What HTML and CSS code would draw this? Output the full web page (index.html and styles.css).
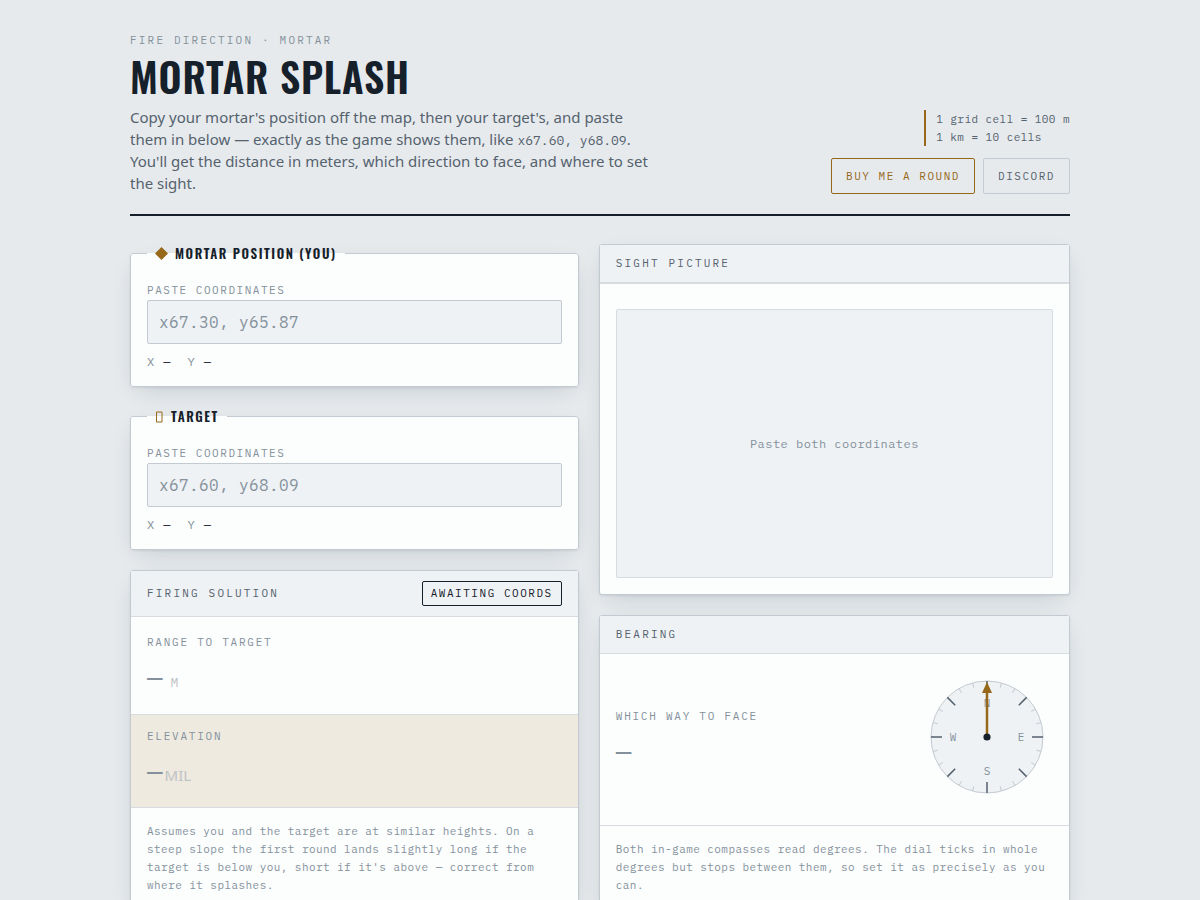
FILE: index.html
```html
<!DOCTYPE html>
<html lang="en">
<head>
<meta charset="utf-8">
<meta name="viewport" content="width=device-width, initial-scale=1">
<title>Mortar Splash</title>
<link rel="stylesheet" href="styles.css">
</head>
<body>
<div class="page">
  <header class="masthead">
    <div class="intro">
      <p class="eyebrow">FIRE DIRECTION · MORTAR</p>
      <h1 class="title">MORTAR SPLASH</h1>
      <p class="lede">Copy your mortar's position off the map, then your target's, and paste them in below — exactly as the game shows them, like <code class="sample">x67.60, y68.09</code>. You'll get the distance in meters, which direction to face, and where to set the sight.</p>
    </div>
    <div class="aside">
      <p class="scale">1 grid cell = 100 m<br>1 km = 10 cells</p>
      <nav class="links">
        <a class="link link-accent" href="#support">BUY ME A ROUND</a>
        <a class="link" href="#discord">DISCORD</a>
      </nav>
    </div>
  </header>

  <main class="columns">
    <div class="column">
      <fieldset class="card position">
        <legend class="legend"><span class="legend-row"><svg class="diamond" viewBox="0 0 12 12" aria-hidden="true"><path d="M6 0L12 6L6 12L0 6Z"/></svg>MORTAR POSITION (YOU)</span></legend>
        <label class="label" for="mortar">PASTE COORDINATES</label>
        <input class="coords" id="mortar" type="text" placeholder="x67.30, y65.87">
        <div class="parsed"><span>X <b class="value">—</b></span><span>Y <b class="value">—</b></span></div>
      </fieldset>

      <fieldset class="card position">
        <legend class="legend"><span class="legend-row"><svg class="marker" viewBox="0 0 9 12" aria-hidden="true"><path d="M1.5 1H7V11H1.5Z"/></svg>TARGET</span></legend>
        <label class="label" for="target">PASTE COORDINATES</label>
        <input class="coords" id="target" type="text" placeholder="x67.60, y68.09">
        <div class="parsed"><span>X <b class="value">—</b></span><span>Y <b class="value">—</b></span></div>
      </fieldset>

      <section class="card">
        <div class="card-head">
          <h2 class="card-title">FIRING SOLUTION</h2>
          <span class="badge">AWAITING COORDS</span>
        </div>
        <div class="reading reading-range">
          <p class="reading-label">RANGE TO TARGET</p>
          <p class="figure">—<span class="unit unit-mono">M</span></p>
        </div>
        <div class="reading reading-elevation">
          <p class="reading-label">ELEVATION</p>
          <p class="figure">—<span class="unit">MIL</span></p>
        </div>
        <p class="note">Assumes you and the target are at similar heights. On a steep slope the first round lands slightly long if the target is below you, short if it's above — correct from where it splashes.</p>
      </section>
    </div>

    <div class="column">
      <section class="card">
        <div class="card-head">
          <h2 class="card-title">SIGHT PICTURE</h2>
        </div>
        <div class="sight">
          <div class="screen">Paste both coordinates</div>
        </div>
      </section>

      <section class="card">
        <div class="card-head">
          <h2 class="card-title">BEARING</h2>
        </div>
        <div class="bearing">
          <div>
            <p class="reading-label">WHICH WAY TO FACE</p>
            <p class="figure">—</p>
          </div>
          <svg class="compass" viewBox="-66 -66 132 132" role="img" aria-label="Compass pointing north">
            <circle class="dial" r="56"/>
            <g class="minor">
              <path id="pair" d="M14.5 -54.1L13.2 -49.3M28 -48.5L25.5 -44.2M48.5 -28L44.2 -25.5M54.1 -14.5L49.3 -13.2"/>
              <use href="#pair" transform="rotate(90)"/>
              <use href="#pair" transform="rotate(180)"/>
              <use href="#pair" transform="rotate(270)"/>
            </g>
            <path class="major" d="M0 -56V-45M0 56V45M-56 0H-45M56 0H45M39.6 -39.6L31.8 -31.8M39.6 39.6L31.8 31.8M-39.6 39.6L-31.8 31.8M-39.6 -39.6L-31.8 -31.8"/>
            <text class="point" x="0" y="-30">N</text>
            <text class="point" x="34" y="4">E</text>
            <text class="point" x="0" y="38">S</text>
            <text class="point" x="-34" y="4">W</text>
            <path class="needle" d="M0 0V-46"/>
            <path class="tip" d="M0 -55L5 -44H-5Z"/>
            <circle class="hub" r="3.6"/>
          </svg>
        </div>
        <p class="note">Both in-game compasses read degrees. The dial ticks in whole degrees but stops between them, so set it as precisely as you can.</p>
      </section>
    </div>
  </main>
</div>
</body>
</html>
```

FILE: styles.css
```css
:root {
  --ground: #e6eaed;
  --panel: #fcfdfd;
  --inset: #eff2f5;
  --ink: #16202a;
  --body: #55626d;
  --muted: #84919c;
  --line: #c3cad1;
  --hairline: #d6dce0;
  --accent: #96681a;
  --mono: "IBM Plex Mono", "Liberation Mono", monospace;
  --display: Oswald, "DejaVu Sans Condensed", sans-serif;
}

* {
  box-sizing: border-box;
}

body {
  margin: 0;
  background: var(--ground);
  color: var(--ink);
  font-family: "Noto Sans", sans-serif;
  overflow-x: hidden;
}

p, h1, h2 {
  margin: 0;
}

.page {
  max-width: 980px;
  margin: 0 auto;
  padding: 32px 20px;
}

.masthead {
  display: flex;
  align-items: flex-end;
  justify-content: space-between;
  gap: 20px;
  padding-bottom: 20px;
  margin-bottom: 28px;
  border-bottom: 2px solid var(--ink);
}

.intro {
  max-width: 520px;
}

.eyebrow {
  color: var(--muted);
  font: 11px/17px var(--mono);
  letter-spacing: 0.2em;
}

.title {
  margin: 3px 0 6px;
  font: 600 40px/48px var(--display);
  letter-spacing: 0.02em;
  white-space: nowrap;
}

.lede {
  color: var(--body);
  font-size: 15px;
  line-height: 22px;
}

.sample {
  font: 13px/18px var(--mono);
}

.aside {
  display: flex;
  flex-direction: column;
  align-items: flex-end;
  gap: 12px;
}

.scale {
  padding-left: 10px;
  border-left: 2px solid var(--accent);
  color: var(--body);
  font: 11px/18px var(--mono);
  letter-spacing: 0.04em;
}

.links {
  display: flex;
  gap: 8px;
}

.link {
  padding: 9px 14px;
  border: 1px solid var(--line);
  border-radius: 2px;
  color: var(--body);
  font: 11px/16px var(--mono);
  letter-spacing: 0.14em;
  text-decoration: none;
}

.link-accent {
  border-color: var(--accent);
  color: var(--accent);
}

.columns {
  display: grid;
  grid-template-columns: minmax(0, 1fr) minmax(0, 1.05fr);
  align-items: start;
  gap: 20px;
}

.column {
  display: flex;
  flex-direction: column;
  gap: 20px;
}

.card {
  min-width: 0;
  margin: 0;
  background: var(--panel);
  border: 1px solid var(--line);
  border-radius: 3px;
  box-shadow: 0 1px 2px rgba(22, 32, 42, 0.08), 0 8px 24px -8px rgba(22, 32, 42, 0.18);
}

.position {
  padding: 18px 16px 15px;
}

.legend {
  padding: 0 8px;
  font: 600 13px/19px var(--display);
  letter-spacing: 0.12em;
}

.legend-row {
  display: flex;
  align-items: center;
  gap: 7px;
}

.diamond {
  width: 13px;
  height: 13px;
  fill: var(--accent);
}

.marker {
  width: 9px;
  height: 12px;
  fill: none;
  stroke: var(--accent);
}

.label {
  display: block;
  color: var(--muted);
  font: 11px/19px var(--mono);
  letter-spacing: 0.14em;
}

.coords {
  display: block;
  width: 100%;
  height: 44px;
  padding: 0 11px;
  background: var(--inset);
  border: 1px solid var(--line);
  border-radius: 2px;
  color: var(--ink);
  font: 16px var(--mono);
  letter-spacing: 0.025em;
}

.coords::placeholder {
  color: var(--muted);
  opacity: 1;
}

.parsed {
  display: flex;
  gap: 16px;
  margin-top: 9px;
  color: var(--muted);
  font: 12px/18px var(--mono);
  letter-spacing: 0.08em;
}

.value {
  color: var(--ink);
  font-weight: 400;
}

.card-head {
  display: flex;
  align-items: center;
  justify-content: space-between;
  padding: 10px 16px;
  background: var(--inset);
  border-bottom: 1px solid var(--hairline);
}

.card-title {
  color: var(--body);
  font: 11px/17px var(--mono);
  letter-spacing: 0.2em;
}

.badge {
  padding: 3px 8px;
  border: 1px solid var(--ink);
  border-radius: 2px;
  font: 11px/17px var(--mono);
  letter-spacing: 0.14em;
}

.reading {
  padding: 13px 16px 16px;
  border-bottom: 1px solid var(--hairline);
}

.reading-range {
  padding: 17px 16px;
}

.reading-elevation {
  background: #eeeae0;
}

.reading-label {
  color: var(--muted);
  font: 11px/17px var(--mono);
  letter-spacing: 0.16em;
}

.figure {
  margin-top: 6px;
  color: var(--muted);
  font: 400 26px/40px var(--mono);
}

.unit {
  margin-left: 2px;
  color: #bfc3c4;
  font: 15px/20px "Noto Sans", sans-serif;
}

.unit-mono {
  margin-left: 8px;
  font: 13px/20px var(--mono);
}

.note {
  padding: 14px 16px;
  color: var(--muted);
  font: 11px/18px var(--mono);
  letter-spacing: 0.04em;
}

.sight {
  padding: 25px 16px 16px;
  border-top: 1px solid var(--hairline);
}

.screen {
  display: grid;
  place-items: center;
  height: 269px;
  background: var(--inset);
  border: 1px solid var(--hairline);
  border-radius: 2px;
  color: var(--muted);
  font: 12px/18px var(--mono);
  letter-spacing: 0.04em;
}

.bearing {
  display: flex;
  align-items: center;
  justify-content: space-between;
  gap: 16px;
  padding: 17px 16px;
  border-bottom: 1px solid var(--hairline);
}

.compass {
  width: 132px;
  height: 132px;
  margin-bottom: 5px;
}

.dial {
  fill: var(--inset);
  stroke: var(--line);
}

.minor {
  stroke: var(--line);
}

.major {
  stroke: var(--body);
  stroke-width: 1.5;
}

.point {
  fill: var(--muted);
  font: 11px var(--mono);
  text-anchor: middle;
}

.needle {
  stroke: var(--accent);
  stroke-width: 2.5;
}

.tip {
  fill: var(--accent);
}

.hub {
  fill: var(--ink);
}
```
